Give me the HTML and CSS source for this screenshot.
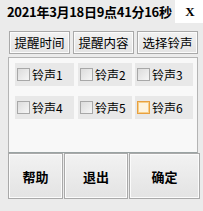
FILE: index.html
```html
<!DOCTYPE html>
<html>
<head>
<meta charset="utf-8">
<link rel="stylesheet" href="styles.css">
</head>
<body>
<div class="win">
  <div class="titlebar">
    <div class="title">2021年3月18日9点41分16秒</div>
    <div class="close">X</div>
  </div>
  <div class="tabs">
    <button class="btn tab">提醒时间</button>
    <button class="btn tab">提醒内容</button>
    <button class="btn tab">选择铃声</button>
  </div>
  <div class="panel">
    <div class="grid">
      <label class="opt c1"><span class="box"></span>铃声1</label>
      <label class="opt c2"><span class="box"></span>铃声2</label>
      <label class="opt c3"><span class="box"></span>铃声3</label>
      <label class="opt c1"><span class="box"></span>铃声4</label>
      <label class="opt c2"><span class="box"></span>铃声5</label>
      <label class="opt c3"><span class="box focus"></span>铃声6</label>
    </div>
  </div>
  <div class="actions">
    <button class="btn act a1">帮助</button>
    <button class="btn act a2">退出</button>
    <button class="btn act a3">确定</button>
  </div>
</div>
</body>
</html>
```
FILE: styles.css
```css
* { box-sizing: border-box; }
html, body { margin: 0; padding: 0; }
body {
  width: 203px;
  height: 211px;
  background: #ebebeb;
  font-family: "Noto Sans CJK SC", "Liberation Sans", sans-serif;
  color: #000;
  overflow: hidden;
}
.win { display: flex; flex-direction: column; }
.titlebar {
  height: 23px;
  display: flex;
  align-items: center;
}
.title {
  flex: 1;
  padding-left: 7px;
  font-size: 13px;
  font-weight: bold;
  letter-spacing: -0.3px;
  white-space: nowrap;
  overflow: hidden;
}
.close {
  flex: none;
  width: 28px;
  height: 23px;
  background: #ffffff;
  font-family: "Liberation Serif", serif;
  font-weight: bold;
  font-size: 13px;
  display: flex;
  align-items: center;
  justify-content: center;
  padding-left: 2px;
}
.tabs {
  display: flex;
  gap: 3px;
  margin: 8px 0 0 9px;
}
.btn {
  font-family: "Noto Sans CJK SC", "Liberation Sans", sans-serif;
  border: 1px solid #a9a9a9;
  box-shadow: inset 0 0 0 1px #fbfbfb;
  background: linear-gradient(#f2f2f2, #e3e3e3);
  color: #000;
  padding: 0;
  margin: 0;
}
.tab {
  width: 61px;
  height: 23px;
  font-size: 12.5px;
  line-height: 21px;
}
.panel {
  margin: 3px 0 0 8px;
  width: 190px;
  height: 96px;
  background: #f8f8f8;
  border: 1px solid #b4b4b4;
  border-bottom: 1px solid #9aa3a3;
  padding: 5px 0 0 6px;
}
.grid {
  display: grid;
  grid-template-columns: 59px 54px 57px;
  column-gap: 4px;
  row-gap: 10px;
}
.c3 { margin-left: -1px; }
.opt {
  height: 23px;
  background: #e8e8e8;
  display: flex;
  align-items: center;
  padding-left: 2px;
  font-size: 12px;
  white-space: nowrap;
}
.box {
  width: 13px;
  height: 13px;
  border: 1px solid #a8a8a8;
  background: linear-gradient(135deg, #dcdcdc, #f6f6f6);
  margin-right: 2px;
  flex: none;
}
.box.focus {
  border: 1px solid #e8a040;
  box-shadow: inset 0 0 0 1px #f7cf88;
  background: #fdf3df;
}
.actions {
  display: flex;
  margin: 0 0 0 8px;
  gap: 1px;
}
.act {
  height: 46px;
  font-size: 13px;
  font-weight: bold;
}
.a1 { width: 55px; }
.a2 { width: 64px; }
.a3 { width: 71px; }
```
